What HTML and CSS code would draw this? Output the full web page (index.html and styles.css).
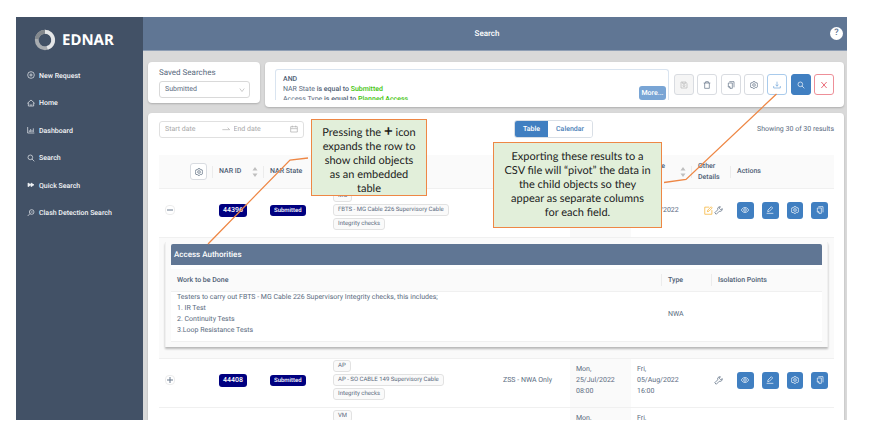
FILE: index.html
```html
<!DOCTYPE html>
<html lang="en">
<head>
<meta charset="utf-8">
<title>EDNAR - Search</title>
<link rel="stylesheet" href="styles.css">
</head>
<body>
<svg class="sprite" aria-hidden="true">
  <symbol id="plus-circle" viewBox="0 0 24 24"><circle cx="12" cy="12" r="10"/><path d="M12 7v10M7 12h10"/></symbol>
  <symbol id="home" viewBox="0 0 24 24"><path d="M1 13 12 3l11 10M4 11v10h16V11M8 16c2 3 6 3 8 0"/></symbol>
  <symbol id="chart" viewBox="0 0 24 24"><path d="M2 3v18h20M7 18v-5M11 18V9M15 18v-6M19 18V7"/></symbol>
  <symbol id="search" viewBox="0 0 24 24"><circle cx="10" cy="10" r="7"/><path d="m15 15 7 7"/></symbol>
  <symbol id="forward" viewBox="0 0 24 24"><path d="M3 6v11l9-5.500zM12 6v11l9-5.500z" fill="currentColor"/></symbol>
  <symbol id="clash" viewBox="0 0 24 24"><circle cx="14" cy="9" r="7"/><path d="m9 14-7 7M11 9h6"/></symbol>
  <symbol id="down" viewBox="0 0 24 24"><path d="m3 6 9 12 9-12"/></symbol>
  <symbol id="arrow" viewBox="0 0 24 24"><path d="M1 14h22l-6-6"/></symbol>
  <symbol id="calendar" viewBox="0 0 24 24"><path d="M2 5h20v16H2zM2 11h20M7 2v5M17 2v5"/></symbol>
  <symbol id="save" viewBox="0 0 24 24"><path d="M3 3h14l4 4v14H3zM8 3v5h8V3"/><circle cx="12" cy="14" r="3"/></symbol>
  <symbol id="trash" viewBox="0 0 24 24"><path d="M2 6h20M8 6V2h8v4M5 6v16h14V6"/></symbol>
  <symbol id="copy" viewBox="0 0 24 24"><path d="M7 2h14v17M4 6h12v16H9l-5-5zM4 17h5v5"/></symbol>
  <symbol id="gear" viewBox="0 0 24 24"><path d="m9 2h6l1 3 2 1 3-1 2 5-2 2 2 3-3 5-3-1-2 1-1 2H9l-1-2-2-1-3 1-2-5 2-3-2-2 2-5 3 1 2-1z"/><circle cx="12" cy="12" r="4"/></symbol>
  <symbol id="download" viewBox="0 0 24 24"><path d="M12 2v13M8 11l4 5 4-5M2 15v6h20v-6"/></symbol>
  <symbol id="close" viewBox="0 0 24 24"><path d="m4 3 16 18M20 3 4 21"/></symbol>
  <symbol id="eye" viewBox="0 0 24 24"><path d="M1 12c5-10 17-10 22 0-5 10-17 10-22 0z"/><circle cx="12" cy="12" r="4"/></symbol>
  <symbol id="pen" viewBox="0 0 24 24"><path d="M2 22h20M5 17l1-5L16 2l4 4-10 10z"/></symbol>
  <symbol id="form" viewBox="0 0 24 24"><path d="M14 3H2v19h19V11M9 15l1-4 9-9 3 3-9 9z"/></symbol>
  <symbol id="wrench" viewBox="0 0 24 24"><path d="M17 2c-5-1-9 4-7 8l-8 8 4 4 8-8c5 2 9-3 8-7l-4 3-4-4z"/></symbol>
  <symbol id="sorter" viewBox="0 0 12 24"><path d="M1 9 6 2l5 7zM1 15l5 7 5-7z" fill="currentColor" stroke="none"/></symbol>
</svg>

<div class="app">
  <nav class="sidebar">
    <div class="brand">
      <svg class="ring" viewBox="0 0 20 20"><circle cx="10" cy="10" r="7.500" stroke="#a9adb1"/><path d="M10 2.500a7.500 7.500 0 0 1 2 14.700" stroke="#e4e6e8"/><path d="M2.600 9A7.500 7.500 0 0 1 10 2.500" stroke="#83888d"/></svg>
      <span>EDNAR</span>
    </div>
    <ul class="menu">
      <li><a href="#"><svg class="icon"><use href="#plus-circle"/></svg>New Request</a></li>
      <li><a href="#"><svg class="icon"><use href="#home"/></svg>Home</a></li>
      <li><a href="#"><svg class="icon"><use href="#chart"/></svg>Dashboard</a></li>
      <li><a href="#"><svg class="icon"><use href="#search"/></svg>Search</a></li>
      <li><a href="#"><svg class="icon"><use href="#forward"/></svg>Quick Search</a></li>
      <li><a href="#"><svg class="icon"><use href="#clash"/></svg>Clash Detection Search</a></li>
    </ul>
  </nav>

  <div class="main">
    <header class="topbar"><h1>Search</h1><button class="help" aria-label="Help">?</button></header>
    <div class="content">
      <div class="filters">
        <section class="card saved">
          <label for="saved">Saved Searches</label>
          <div class="select"><select id="saved"><option>Submitted</option></select><svg class="icon"><use href="#down"/></svg></div>
        </section>
        <section class="card query">
          <div class="rules">
            <div class="rule-text">
              <b>AND</b>
              <p>NAR State <b>is equal to</b> <b class="value">Submitted</b></p>
              <p>Access Type <b>is equal to</b> <b class="value">Planned Access</b></p>
            </div>
            <button class="more">More...</button>
          </div>
          <div class="toolbar">
            <button class="tool disabled" aria-label="Save" disabled><svg class="icon"><use href="#save"/></svg></button>
            <button class="tool" aria-label="Delete"><svg class="icon"><use href="#trash"/></svg></button>
            <button class="tool" aria-label="Copy"><svg class="icon"><use href="#copy"/></svg></button>
            <button class="tool" aria-label="Settings"><svg class="icon"><use href="#gear"/></svg></button>
            <button class="tool export" aria-label="Export"><svg class="icon"><use href="#download"/></svg></button>
            <button class="tool primary" aria-label="Search"><svg class="icon"><use href="#search"/></svg></button>
            <button class="tool danger" aria-label="Clear"><svg class="icon"><use href="#close"/></svg></button>
          </div>
        </section>
      </div>

      <section class="card results">
        <div class="controls">
          <div class="range">
            <input type="text" placeholder="Start date" aria-label="Start date">
            <svg class="icon"><use href="#arrow"/></svg>
            <input type="text" placeholder="End date" aria-label="End date">
            <svg class="icon"><use href="#calendar"/></svg>
          </div>
          <div class="views"><button class="active">Table</button><button>Calendar</button></div>
          <span class="count">Showing 30 of 30 results</span>
        </div>

        <table class="grid">
          <colgroup><col class="c-expand"><col class="c-id"><col class="c-state"><col><col class="c-type"><col class="c-date"><col class="c-date"><col class="c-other"><col class="c-actions"></colgroup>
          <thead>
            <tr>
              <th class="split config"><button class="square" aria-label="Columns"><svg class="icon"><use href="#gear"/></svg></button></th>
              <th class="split"><div class="sortable">NAR ID<svg class="sorter"><use href="#sorter"/></svg></div></th>
              <th>NAR State</th>
              <th></th>
              <th></th>
              <th></th>
              <th class="split"><div class="sortable"><span>End Date<br>&nbsp;</span><svg class="sorter"><use href="#sorter"/></svg></div></th>
              <th class="split">Other Details</th>
              <th>Actions</th>
            </tr>
          </thead>
          <tbody>
            <tr class="record">
              <td><button class="expander" aria-label="Collapse row"><svg viewBox="0 0 8 8"><path d="M1 4h6"/></svg></button></td>
              <td><span class="badge id">44396</span></td>
              <td><span class="badge">Submitted</span></td>
              <td><div class="tags"><span>MG</span><span>FBTS - MG Cable 226 Supervisory Cable</span><span>Integrity checks</span></div></td>
              <td></td>
              <td class="sorted"></td>
              <td>05/Aug/2022</td>
              <td><div class="other"><svg class="icon form"><use href="#form"/></svg><svg class="icon"><use href="#wrench"/></svg></div></td>
              <td><div class="actions"><button aria-label="View"><svg class="icon"><use href="#eye"/></svg></button><button aria-label="Edit"><svg class="icon"><use href="#pen"/></svg></button><button aria-label="Configure"><svg class="icon"><use href="#gear"/></svg></button><button aria-label="Copy"><svg class="icon"><use href="#copy"/></svg></button></div></td>
            </tr>
            <tr class="expanded">
              <td colspan="9">
                <div class="child">
                  <h2>Access Authorities</h2>
                  <table class="child-grid">
                    <colgroup><col><col class="c-kind"><col class="c-points"></colgroup>
                    <thead><tr><th class="split">Work to be Done</th><th class="split">Type</th><th>Isolation Points</th></tr></thead>
                    <tbody><tr><td>Testers to carry out FBTS - MG Cable 226 Supervisory Integrity checks, this includes;<br>1. IR Test<br>2. Continuity Tests<br>3.Loop Resistance Tests</td><td>NWA</td><td></td></tr></tbody>
                  </table>
                </div>
              </td>
            </tr>
            <tr class="record">
              <td><button class="expander" aria-label="Expand row"><svg viewBox="0 0 8 8"><path d="M1 4h6M4 1v6"/></svg></button></td>
              <td><span class="badge id">44408</span></td>
              <td><span class="badge">Submitted</span></td>
              <td><div class="tags"><span>AP</span><span>AP - SO CABLE 149 Supervisory Cable</span><span>Integrity checks</span></div></td>
              <td>ZSS - NWA Only</td>
              <td class="sorted">Mon,<br>25/Jul/2022<br>08:00</td>
              <td>Fri,<br>05/Aug/2022<br>16:00</td>
              <td><div class="other"><svg class="icon"><use href="#wrench"/></svg></div></td>
              <td><div class="actions"><button aria-label="View"><svg class="icon"><use href="#eye"/></svg></button><button aria-label="Edit"><svg class="icon"><use href="#pen"/></svg></button><button aria-label="Configure"><svg class="icon"><use href="#gear"/></svg></button><button aria-label="Copy"><svg class="icon"><use href="#copy"/></svg></button></div></td>
            </tr>
            <tr class="record last">
              <td></td><td></td><td></td>
              <td><div class="tags"><span>VM</span></div></td>
              <td></td>
              <td class="sorted">Mon,</td>
              <td>Fri,</td>
              <td></td><td></td>
            </tr>
          </tbody>
        </table>
      </section>
    </div>
  </div>

  <svg class="pointers" aria-hidden="true"><path d="M292 141 274 143 192 227M648 165.500 670 162.500 760.500 77"/></svg>
  <aside class="note note-expand">Pressing the <b>+</b> icon expands the row to show child objects as an embedded table</aside>
  <aside class="note note-export">Exporting these results to a CSV file will “pivot” the data in the child objects so they appear as separate columns for each field.</aside>
</div>
</body>
</html>
```
FILE: styles.css
```css
* { box-sizing: border-box; }

body {
  margin: 0;
  padding: 17px 25px 22px 16px;
  height: 100vh;
  background: #fff;
  color: #5a6b80;
  font: 7px/11px Roboto, "Liberation Sans", sans-serif;
  text-rendering: geometricPrecision;
}

button, input, select { font: inherit; color: inherit; margin: 0; padding: 0; text-rendering: inherit; }
p, h1, h2, ul { margin: 0; padding: 0; }
.sprite { position: absolute; width: 0; height: 0; }

.icon {
  width: 8px;
  height: 8px;
  flex: none;
  fill: none;
  stroke: currentColor;
  stroke-width: 2;
}

.app {
  position: relative;
  display: grid;
  grid-template-columns: 127px minmax(0, 1fr);
  height: 100%;
  overflow: hidden;
}

/* Sidebar */
.sidebar { background: #425166; color: #f2f4f7; }

.brand {
  display: flex;
  align-items: center;
  gap: 6px;
  height: 45px;
  padding-left: 18px;
  font: bold 15px/20px "Noto Sans", sans-serif;
  color: #fff;
}

.ring { width: 22px; height: 22px; fill: none; stroke-width: 3.500; }

.menu {
  display: grid;
  grid-auto-rows: 1fr;
  height: 165px;
  list-style: none;
}

.menu li { display: grid; }

.menu a {
  display: flex;
  align-items: center;
  gap: 4px;
  padding: 1px 0 0 11px;
  color: inherit;
  font-weight: 500;
  text-decoration: none;
}
.menu .icon { margin-bottom: 2px; }

/* Main area */
.main { display: flex; flex-direction: column; min-height: 0; background: #d9d9d9; }

.topbar {
  position: relative;
  display: flex;
  flex: none;
  align-items: center;
  justify-content: center;
  height: 34px;
  padding-right: 16px;
  background: #607694;
  border-bottom: 1px solid #8f9fb5;
  color: #fff;
}

.topbar h1 { font-size: 8px; font-weight: 500; }

.help {
  position: absolute;
  right: 4px;
  width: 13px;
  height: 13px;
  border: 0;
  border-radius: 50%;
  background: #fff;
  color: #607694;
  font-size: 9px;
  font-weight: 500;
}

.content {
  display: flex;
  flex: 1;
  flex-direction: column;
  gap: 6px;
  min-height: 0;
  padding: 11px 3px 0 5px;
}

.card { background: #fff; border-radius: 4px; box-shadow: 0 1px 2px #0003; }

.filters { display: flex; align-items: flex-start; gap: 5px; }
.saved { width: 112px; padding: 5px 10px 0 11px; height: 41px; }
.saved label { display: block; font-size: 8px; line-height: 11px; margin-bottom: 3px; }

.select { position: relative; }
.select select {
  display: block;
  width: 100%;
  height: 17px;
  padding-left: 5px;
  border: 1px solid #d9d9d9;
  border-radius: 3px;
  background: #fff;
  appearance: none;
}
.select .icon { position: absolute; right: 5px; top: 6px; width: 6px; height: 6px; color: #999; }

.query { display: flex; flex: 1; gap: 5px; height: 45px; padding: 7px 10px; min-width: 0; }

.rules {
  position: relative;
  flex: 1;
  overflow: hidden;
  padding: 4px 7px 0;
  border: 1px solid #d9e4f0;
  border-bottom: 0;
  border-radius: 3px 3px 0 0;
}
.rule-text { line-height: 10px; }
.rules b { font-weight: 500; color: #4f6075; }
.rules .value { color: #41c30b; }

.more {
  position: absolute;
  right: 2px;
  bottom: 0;
  width: 27px;
  height: 14px;
  border: 0;
  border-radius: 3px;
  background: #79a5d5;
  color: #fff;
  font-weight: 500;
}

.toolbar { display: flex; justify-content: space-between; width: 160px; padding-top: 5px; }

.tool, .square {
  display: flex;
  align-items: center;
  justify-content: center;
  width: 20px;
  height: 21px;
  border: 1px solid #d9dce1;
  border-radius: 3px;
  background: #fff;
}
.tool.disabled { background: #f5f5f5; color: #b5b5b5; }
.tool.export { border-color: #a9cbec; color: #6ba2d8; }
.tool.primary { background: #407fc1; border-color: #407fc1; color: #fff; }
.tool.danger { border-color: #ee8f98; color: #e02438; }

/* Results */
.results { flex: 1; min-height: 0; padding: 6px 10px 0 11px; overflow: hidden; border-radius: 4px 4px 0 0; }

.controls {
  display: grid;
  grid-template-columns: 1fr auto 1fr;
  align-items: center;
  height: 20px;
  margin-bottom: 16px;
}
.range {
  display: flex;
  align-items: center;
  width: 145px;
  height: 17px;
  padding: 0 5px;
  gap: 4px;
  border: 1px solid #e0e0e0;
  border-radius: 3px;
  color: #aaa;
}
.range input { flex: 1; min-width: 0; border: 0; background: none; }
.range input::placeholder { color: #a8a8a8; }

.views { display: flex; height: 18px; margin-left: 114px; border: 1px solid #d9dfe6; border-radius: 3px; overflow: hidden; }
.views button { padding: 0 8px; border: 0; background: #fff; color: #4c7fb8; font-weight: 500; }
.views .active { background: #407fc1; color: #fff; }
.count { text-align: right; }

table { width: 100%; border-collapse: separate; border-spacing: 0; table-layout: fixed; }
th, td { padding: 0 6px; text-align: left; vertical-align: middle; }
th { background: #fafafa; border-bottom: 1px solid #f0f0f0; color: #4f6075; font-weight: 500; }
.split { background-image: linear-gradient(#ececec, #ececec); background-size: 1px 12px; background-position: right center; background-repeat: no-repeat; }

.c-expand { width: 54px; }
.c-id { width: 51px; }
.c-state { width: 63px; }
.c-type { width: 73px; }
.c-date { width: 61px; }
.c-other { width: 39px; }
.c-actions { width: 103px; }

.grid > thead th { height: 34px; }
.config .square { margin-left: auto; width: 17px; height: 17px; }
.sortable { display: flex; align-items: center; justify-content: space-between; }
.sorter { width: 6px; height: 12px; color: #bfbfbf; }

.record td { height: 49px; padding-bottom: 6px; border-bottom: 1px solid #f0f0f0; }
.record.last td { vertical-align: top; padding-top: 2px; }
.record.last td.sorted, .record.last td.sorted + td { padding-top: 5px; }
.sorted { background: #fafafa; }

.expander {
  display: flex;
  align-items: center;
  justify-content: center;
  width: 10px;
  height: 10px;
  border: 1px solid #ececec;
  border-radius: 4px;
  background: #fff;
}
.expander svg { flex: none; width: 8px; height: 8px; fill: none; stroke: #6b7a8e; stroke-width: 1; }

.badge {
  display: inline-block;
  padding: 0 4px;
  border-radius: 3px;
  background: #000080;
  color: #fff;
  font-size: 6px;
  font-weight: 500;
  line-height: 11px;
}
.badge.id { font-size: 7px; line-height: 13px; }

.tags { display: flex; flex-direction: column; align-items: flex-start; gap: 2px; font-size: 6px; }
.tags span { padding: 0 4px; border: 1px solid #e2e2e2; border-radius: 3px; background: #fafafa; line-height: 10px; white-space: nowrap; }

.other { display: flex; justify-content: flex-end; gap: 1px; padding-right: 2px; }
.other .icon { width: 9px; height: 9px; }
.other .form { color: #f5b335; }

.actions { display: flex; gap: 8px; }
.actions button {
  display: flex;
  align-items: center;
  justify-content: center;
  width: 17px;
  height: 17px;
  border: 0;
  border-radius: 3px;
  background: #407fc1;
  color: #fff;
}

.expanded > td { padding: 4px 6px 11px; background: #fafafa; border-bottom: 1px solid #f0f0f0; }
.child { padding: 2px 5px 5px; box-shadow: 0 2px 2px #0004; border: solid #f0f0f0; border-width: 0 1px; }
.child h2 { padding-left: 3px; background: #607694; border-radius: 2px 2px 0 0; color: #fff; font-size: 8px; font-weight: 500; line-height: 21px; }
.child-grid { border-top: 4px solid #fff; }
.child-grid th { height: 23px; }
.child-grid td { padding: 0 6px 5px; background: #fff; border-bottom: 1px solid #f0f0f0; }
.c-kind { width: 50px; }
.c-points { width: 110px; }

/* Annotations over the page */
.pointers { position: absolute; left: 0; top: 0; width: 100%; height: 100%; fill: none; stroke: #ee8745; stroke-width: 1.300; pointer-events: none; }

.note {
  position: absolute;
  border: 1px solid #ee8745;
  background: #e2efda;
  color: #1c1c1c;
  font: 11px/14px Lato, sans-serif;
  text-align: center;
}
.note b { font-size: 15px; line-height: 17px; }
.note-expand { left: 295px; top: 102px; width: 116px; height: 77px; padding: 3px 8px 0; }
.note-export { left: 477px; top: 125px; width: 169px; padding: 7px 10px; }
```
